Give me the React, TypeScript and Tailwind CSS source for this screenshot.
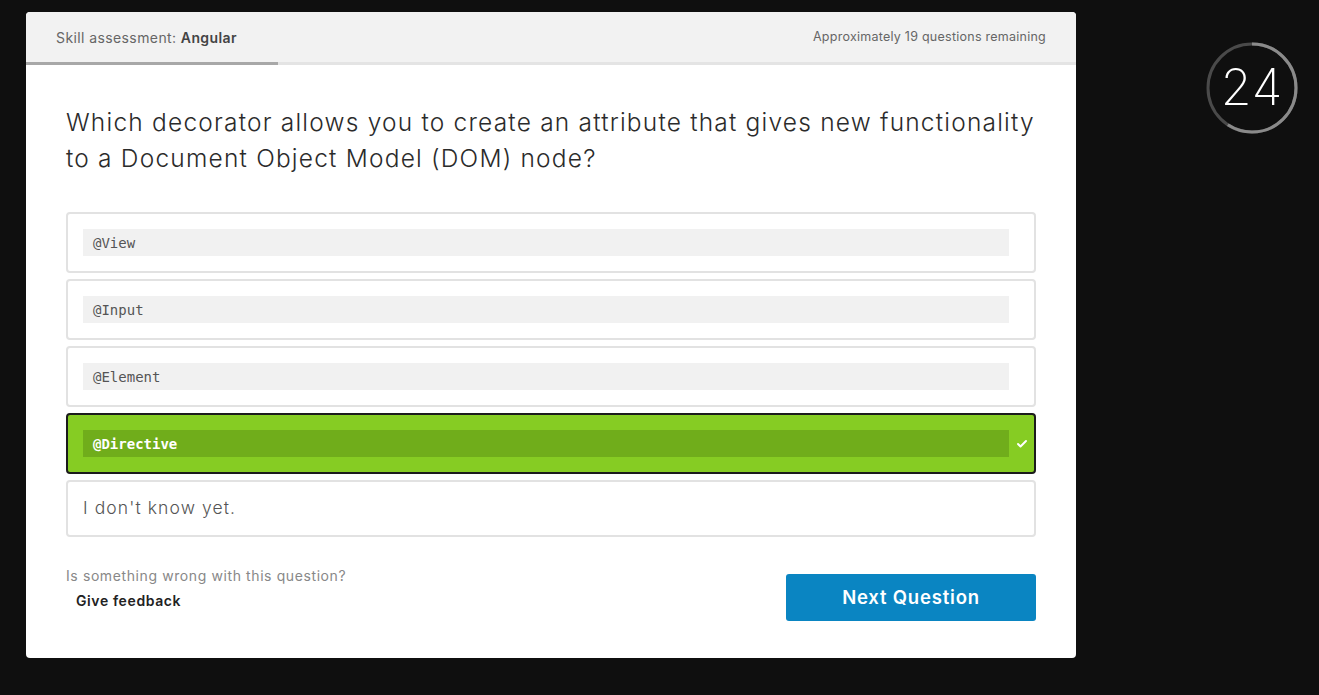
import { Check } from "lucide-react";

const options = [
  { id: "view", label: "@View" },
  { id: "input", label: "@Input" },
  { id: "element", label: "@Element" },
  { id: "directive", label: "@Directive", selected: true },
];

function Timer() {
  const r = 44;
  const c = 2 * Math.PI * r;
  const done = 213 / 360;
  return (
    <div className="relative w-[96px] h-[96px]">
      <svg width="96" height="96" viewBox="0 0 96 96" className="absolute inset-0">
        <circle cx="48" cy="48" r={r} fill="none" stroke="#4a4a4a" strokeWidth="3" />
        <circle
          cx="48"
          cy="48"
          r={r}
          fill="none"
          stroke="#8a8a8a"
          strokeWidth="3"
          strokeDasharray={`${c * done} ${c}`}
          transform="rotate(-90 48 48)"
        />
      </svg>
      <div className="absolute inset-0 flex items-center justify-center text-white text-[50px] font-extralight leading-none pb-[2px] tracking-[1px]">
        24
      </div>
    </div>
  );
}

export default function App() {
  return (
    <div
      className="min-h-[695px] bg-[#0f0f0f] flex items-start pl-[26px] pt-[12px]"
      style={{ fontFamily: "Inter, 'Open Sans', sans-serif" }}
    >
      <div className="w-[1050px] bg-white rounded-[4px] overflow-hidden">
        {/* Header */}
        <div className="bg-[#f2f2f2] h-[50px] px-[30px] flex items-center justify-between">
          <div className="text-[14px] text-[#666] tracking-[0.4px]">
            Skill assessment: <span className="font-semibold text-[#444]">Angular</span>
          </div>
          <div className="text-[12.5px] text-[#666] tracking-[0.25px]">Approximately 19 questions remaining</div>
        </div>
        <div className="h-[3px] bg-[#e4e4e4]">
          <div className="h-full w-[252px] bg-[#a8a8a8]" />
        </div>

        <div className="px-[40px] pt-[40px] pb-[37px]">
          <h1 className="text-[24.5px] leading-[36px] text-[#2b2b2b] font-light tracking-[1.2px] -mt-[1px]">
            Which decorator allows you to create an attribute that gives new functionality
            <br />
            to a Document Object Model (DOM) node?
          </h1>

          <div className="mt-[36px] flex flex-col gap-[6px]">
            {options.map((o) =>
              o.selected ? (
                <div
                  key={o.id}
                  className="flex items-center border-2 border-[#1b1b1b] bg-[#86cc23] rounded-[4px] pl-[15px] py-[15px]"
                >
                  <div
                    className="flex-1 h-[27px] flex items-center pl-[10px] pt-[1px] bg-[#70ad1b] text-white font-bold text-[14px]"
                    style={{ fontFamily: "'DejaVu Sans Mono', monospace" }}
                  >
                    {o.label}
                  </div>
                  <div className="w-[25px] flex justify-center">
                    <Check className="w-[12px] h-[12px] text-white" strokeWidth={4} />
                  </div>
                </div>
              ) : (
                <div
                  key={o.id}
                  className="flex items-center border-2 border-[#e2e2e2] bg-white rounded-[4px] pl-[15px] pr-[25px] py-[15px]"
                >
                  <div
                    className="flex-1 h-[27px] flex items-center pl-[10px] pt-[1px] bg-[#f1f1f1] text-[#555] text-[14px]"
                    style={{ fontFamily: "'DejaVu Sans Mono', monospace" }}
                  >
                    {o.label}
                  </div>
                </div>
              )
            )}
            <div className="border-2 border-[#e2e2e2] rounded-[4px] h-[57px] flex items-center px-[15px] text-[17.5px] text-[#555] font-light tracking-[1.1px]">
              I don't know yet.
            </div>
          </div>

          <div className="mt-[37px] flex items-start justify-between">
            <div>
              <div className="text-[14px] text-[#888] leading-[16px] -mt-[6px] tracking-[0.6px]">
                Is something wrong with this question?
              </div>
              <div className="mt-[6px] ml-[10px] text-[14px] font-semibold text-[#222] tracking-[0.6px]">
                Give feedback
              </div>
            </div>
            <button className="w-[250px] h-[47px] rounded-[3px] bg-[#0a85c2] text-white text-[18.5px] font-semibold tracking-[0.8px]">
              Next Question
            </button>
          </div>
        </div>
      </div>

      <div className="ml-[128px] mt-[28px]">
        <Timer />
      </div>
    </div>
  );
}
